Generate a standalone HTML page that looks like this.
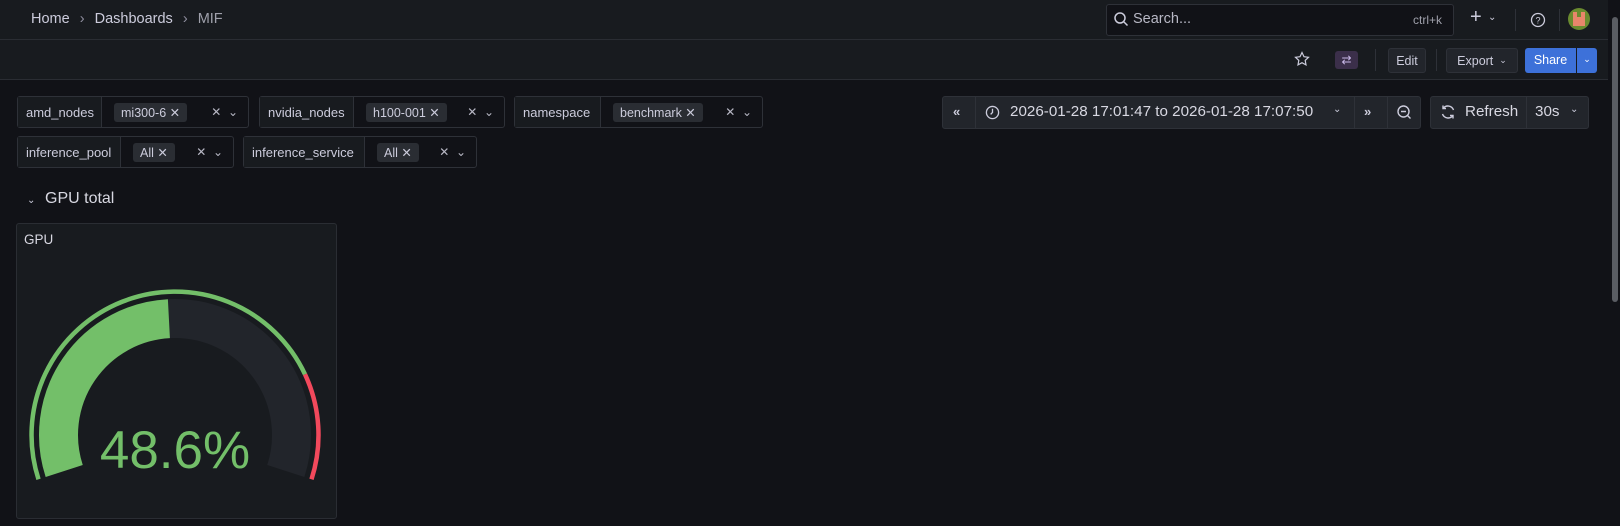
<!DOCTYPE html>
<html><head><meta charset="utf-8"><style>
*{box-sizing:border-box;margin:0;padding:0}
body{width:1620px;height:526px;background:#111217;font-family:"Liberation Sans",sans-serif;color:#ccccdc;position:relative;overflow:hidden;font-size:13px}
.a{position:absolute}
.hdr{left:0;top:0;width:1608px;height:40px;background:#181b1f;border-bottom:1px solid #2a2d33}
.bar2{left:0;top:40px;width:1608px;height:40px;background:#181b1f;border-bottom:1px solid #2a2d33}
.box{position:absolute;border:1px solid #2e3138;border-radius:3px;background:#111217;height:32px;display:flex;align-items:center}
.lab{height:100%;display:flex;align-items:center;padding-left:8px;background:#181b1f;border-right:1px solid #2e3138;color:#ccccdc;flex:none}
.chip{background:#2a2d33;border-radius:3px;padding:2px 7px;margin-left:12px;color:#ccccdc;font-size:12.5px}
.btn{position:absolute;border:1px solid #2e3138;border-radius:3px;background:#22252b;display:flex;align-items:center;justify-content:center;color:#ccccdc}
.x{margin-left:auto;margin-right:10px;font-size:12px;color:#b8b8c5}
</style></head><body>
<div class="a hdr"></div>
<div class="a" style="left:31px;top:11px;font-size:14.5px;color:#ccccdc">Home <span style="color:#8e8e9e;margin:0 6px">›</span> Dashboards <span style="color:#8e8e9e;margin:0 6px">›</span> <span style="color:#9fa0ab">MIF</span></div>
<div class="a" style="left:1106px;top:4px;width:348px;height:32px;border:1px solid #2e3138;border-radius:3px;background:#111217"></div>
<svg class="a" style="left:1113px;top:11px" width="16" height="16" viewBox="0 0 16 16"><circle cx="7" cy="7" r="5" fill="none" stroke="#ccccdc" stroke-width="1.5"/><path d="M11 11l3.5 3.5" stroke="#ccccdc" stroke-width="1.5"/></svg>
<div class="a" style="left:1133px;top:11px;font-size:14.5px;color:#b8b8c5">Search...</div>
<div class="a" style="left:1413px;top:13px;font-size:12px;color:#9fa0ab">ctrl+k</div>
<div class="a" style="left:1470px;top:6px;font-size:20px;color:#ccccdc">+</div><div class="a" style="left:1488px;top:12px;font-size:10px;color:#ccccdc">⌄</div>
<div class="a" style="left:1515px;top:9px;width:1px;height:22px;background:#2e3138"></div>
<svg class="a" style="left:1530px;top:12px" width="16" height="16" viewBox="0 0 16 16"><circle cx="8" cy="8" r="6.5" fill="none" stroke="#ccccdc" stroke-width="1.3"/><text x="8" y="11.5" font-size="9" text-anchor="middle" fill="#ccccdc" font-family="Liberation Sans">?</text></svg>
<div class="a" style="left:1559px;top:9px;width:1px;height:22px;background:#2e3138"></div>
<div class="a" style="left:1568px;top:8px;width:22px;height:22px;border-radius:50%;background:#6a8b2f;overflow:hidden"><div class="a" style="left:5px;top:4px;width:12px;height:14px;background:#e8866b"></div><div class="a" style="left:9px;top:4px;width:4px;height:5px;background:#6a8b2f"></div></div>
<div class="a" style="left:1612px;top:17px;width:6px;height:285px;border-radius:3px;background:#5a5d63"></div>
<div class="a bar2"></div>
<svg class="a" style="left:1294px;top:51px" width="16" height="16" viewBox="0 0 16 16"><path d="M8 1.5l2 4.2 4.5.6-3.3 3.1.8 4.5L8 11.7 4 13.9l.8-4.5L1.5 6.3 6 5.7z" fill="none" stroke="#ccccdc" stroke-width="1.2"/></svg>
<div class="a" style="left:1335px;top:51px;width:23px;height:18px;border-radius:3px;background:#3b2f4a;color:#c9b8e8;font-size:12px;text-align:center;line-height:18px">⇄</div>
<div class="a" style="left:1375px;top:49px;width:1px;height:22px;background:#2e3138"></div>
<div class="btn" style="left:1388px;top:48px;width:38px;height:25px;font-size:12.5px">Edit</div>
<div class="a" style="left:1436px;top:49px;width:1px;height:22px;background:#2e3138"></div>
<div class="btn" style="left:1446px;top:48px;width:72px;height:25px;font-size:12.5px">Export <span style="font-size:9px;margin-left:6px">⌄</span></div>
<div class="a" style="left:1525px;top:48px;width:51px;height:25px;background:#3d71d9;border-radius:3px 0 0 3px;color:#fff;font-size:12.5px;text-align:center;line-height:25px">Share</div>
<div class="a" style="left:1577px;top:48px;width:20px;height:25px;background:#3d71d9;border-radius:0 3px 3px 0;color:#fff;font-size:9px;text-align:center;line-height:22px">⌄</div>

<div class="box" style="left:17px;top:96px;width:232px"><div class="lab" style="width:84px">amd_nodes</div><span class="chip">mi300-6 ✕</span><span class="x">✕ &nbsp;⌄</span></div>
<div class="box" style="left:259px;top:96px;width:246px"><div class="lab" style="width:94px">nvidia_nodes</div><span class="chip">h100-001 ✕</span><span class="x">✕ &nbsp;⌄</span></div>
<div class="box" style="left:514px;top:96px;width:249px"><div class="lab" style="width:86px">namespace</div><span class="chip">benchmark ✕</span><span class="x">✕ &nbsp;⌄</span></div>
<div class="box" style="left:17px;top:136px;width:217px"><div class="lab" style="width:103px">inference_pool</div><span class="chip">All ✕</span><span class="x">✕ &nbsp;⌄</span></div>
<div class="box" style="left:243px;top:136px;width:234px"><div class="lab" style="width:121px">inference_service</div><span class="chip">All ✕</span><span class="x">✕ &nbsp;⌄</span></div>

<div class="a" style="left:942px;top:96px;width:479px;height:33px;border:1px solid #2e3138;border-radius:3px;background:#22252b"></div>
<div class="a" style="left:975px;top:96px;width:1px;height:33px;background:#2e3138"></div>
<div class="a" style="left:1354px;top:96px;width:1px;height:33px;background:#2e3138"></div>
<div class="a" style="left:1387px;top:96px;width:1px;height:33px;background:#2e3138"></div>
<div class="a" style="left:953px;top:104px;font-size:13px;font-weight:bold">«</div>
<svg class="a" style="left:985px;top:105px" width="15" height="15" viewBox="0 0 16 16"><circle cx="8" cy="8" r="6.5" fill="none" stroke="#ccccdc" stroke-width="1.4"/><path d="M8 4v4l-2 2" fill="none" stroke="#ccccdc" stroke-width="1.4"/></svg>
<div class="a" style="left:1010px;top:103px;font-size:15.2px;color:#d8d8e2">2026-01-28 17:01:47 to 2026-01-28 17:07:50</div>
<div class="a" style="left:1333px;top:104px;font-size:10px">⌄</div>
<div class="a" style="left:1364px;top:104px;font-size:13px;font-weight:bold">»</div>
<svg class="a" style="left:1396px;top:104px" width="16" height="17" viewBox="0 0 16 17"><circle cx="7.5" cy="7.5" r="5.5" fill="none" stroke="#ccccdc" stroke-width="1.4"/><path d="M5 7.5h5M11.5 11.5l3 3" stroke="#ccccdc" stroke-width="1.4"/></svg>
<div class="a" style="left:1430px;top:96px;width:159px;height:33px;border:1px solid #2e3138;border-radius:3px;background:#22252b"></div>
<div class="a" style="left:1526px;top:96px;width:1px;height:33px;background:#2e3138"></div>
<svg class="a" style="left:1440px;top:104px" width="16" height="16" viewBox="0 0 16 16"><path d="M13.5 6A6 6 0 0 0 3 4.5M2.5 10A6 6 0 0 0 13 11.5" fill="none" stroke="#ccccdc" stroke-width="1.4"/><path d="M3 1.5v3h3M13 14.5v-3h-3" fill="none" stroke="#ccccdc" stroke-width="1.4"/></svg>
<div class="a" style="left:1465px;top:103px;font-size:15.2px;color:#d8d8e2">Refresh</div>
<div class="a" style="left:1535px;top:103px;font-size:15.2px;color:#d8d8e2">30s</div>
<div class="a" style="left:1570px;top:104px;font-size:10px">⌄</div>

<div class="a" style="left:27px;top:195px;font-size:10px">⌄</div>
<div class="a" style="left:45px;top:190px;font-size:16px;color:#d8d8e2">GPU total</div>

<div class="a" style="left:16px;top:223px;width:321px;height:296px;background:#181b1f;border:1px solid #2a2d33;border-radius:3px"></div>
<div class="a" style="left:24px;top:232px;font-size:13.5px;color:#d8d8e2">GPU</div>
<svg class="a" style="left:0;top:0" width="400" height="526">
<path d="M64.2 471 A116.5 116.5 0 1 1 285.8 471" fill="none" stroke="#22252b" stroke-width="39"/>
<path d="M64.2 471 A116.5 116.5 0 0 1 168.9 318.7" fill="none" stroke="#73bf69" stroke-width="39"/>
<path d="M38.5 479.3 A143.5 143.5 0 0 1 305 374.3" fill="none" stroke="#73bf69" stroke-width="4.5"/>
<path d="M305 374.3 A143.5 143.5 0 0 1 311.5 479.3" fill="none" stroke="#f2495c" stroke-width="4.5"/>
<text x="175" y="468" font-size="53" fill="#73bf69" text-anchor="middle" font-family="Liberation Sans">48.6%</text>
</svg>
</body></html>
